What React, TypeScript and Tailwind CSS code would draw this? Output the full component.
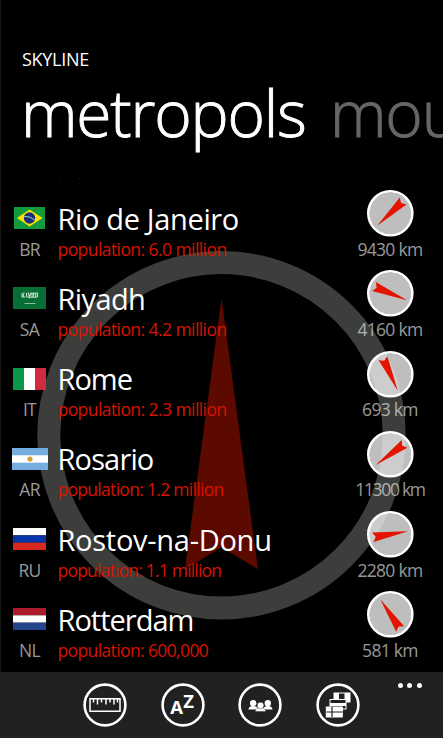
import type { ReactNode } from 'react'

const NEEDLE = '0,-137 36.5,134 0,112 -36.5,134'

const cities = [
  { name: 'Rio de Janeiro', code: 'BR', population: '6.0 million', distance: '9430 km', angle: -133.7, tracking: 'tracking-[-0.35px]', detail: 'tracking-[-0.57px]' },
  { name: 'Riyadh', code: 'SA', population: '4.2 million', distance: '4160 km', angle: 112.4, tracking: 'tracking-[-0.6px]', detail: 'tracking-[-0.57px]' },
  { name: 'Rome', code: 'IT', population: '2.3 million', distance: '693 km', angle: 155.6, tracking: 'tracking-[-1px]', detail: 'tracking-[-0.57px]' },
  { name: 'Rosario', code: 'AR', population: '1.2 million', distance: '11300 km', angle: -126.5, tracking: 'tracking-[-0.85px]', detail: 'tracking-[-0.7px]' },
  { name: 'Rostov-na-Donu', code: 'RU', population: '1.1 million', distance: '2280 km', angle: 80.2, tracking: 'tracking-[-0.28px]', detail: 'tracking-[-0.8px]' },
  { name: 'Rotterdam', code: 'NL', population: '600,000', distance: '581 km', angle: -33.9, tracking: 'tracking-[-1px]', detail: 'tracking-[-0.62px]' },
]

function Stripes({ colors }: { colors: string[] }) {
  return (
    <svg width="33" height="22" viewBox="0 0 33 22">
      {colors.map((c, i) => (
        <rect key={i} y={(i * 22) / 3} width="33" height={22 / 3} fill={c} />
      ))}
    </svg>
  )
}

function Flag({ code }: { code: string }) {
  switch (code) {
    case 'BR':
      return (
        <svg width="31" height="22" viewBox="0 0 31 22">
          <rect width="31" height="22" fill="#129a3c" />
          <path d="M15.5 2.5L28.5 11L15.5 19.5L3 11Z" fill="#fde102" />
          <circle cx="15.5" cy="11" r="5.7" fill="#152f78" />
          <path d="M10.3 9.5Q16 8.8 20.7 13" stroke="#b9c4d8" strokeWidth="1" fill="none" />
        </svg>
      )
    case 'SA':
      return (
        <svg width="33" height="22" viewBox="0 0 33 22">
          <rect width="33" height="22" fill="#076f35" />
          <path
            d="M9 6v4M11 5.5l-1 4.5h2.5M13.5 6v4M15 5.5l1.5 4.5 1.5-4.5M19 6v4M20.5 5.5v4.5M22 6l1 4M24.5 5.5v4.5M9 10h3M14 10.3h10M18 6.3h6"
            stroke="#c5dccd"
            strokeWidth="1.1"
            fill="none"
          />
          <path d="M11.5 16.5h11" stroke="#8fbca0" strokeWidth="1" />
        </svg>
      )
    case 'IT':
      return (
        <svg width="33" height="22" viewBox="0 0 33 22">
          <rect width="11" height="22" fill="#0b984a" />
          <rect x="11" width="11" height="22" fill="#fff" />
          <rect x="22" width="11" height="22" fill="#d22b3f" />
        </svg>
      )
    case 'AR':
      return (
        <svg width="36" height="22" viewBox="0 0 36 22">
          <rect width="36" height="22" fill="#76addf" />
          <rect y="7.3" width="36" height="7.4" fill="#fff" />
          <circle cx="18" cy="11" r="2.6" fill="#dc9a35" />
        </svg>
      )
    case 'RU':
      return <Stripes colors={['#ffffff', '#0535a8', '#d8291f']} />
    default:
      return <Stripes colors={['#ad1c2b', '#ffffff', '#21468b']} />
  }
}

function Direction({ angle }: { angle: number }) {
  return (
    <svg width="48" height="48" viewBox="-24.3 -24.3 48 48">
      <circle r="21" fill="#fff" fillOpacity="0.745" />
      <circle r="22" fill="none" stroke="#fff" strokeWidth="2.6" />
      <g transform={`rotate(${angle}) scale(0.132)`}>
        <polygon points={NEEDLE} fill="#e51400" />
      </g>
    </svg>
  )
}

function BackgroundCompass() {
  return (
    <svg className="absolute left-[37px] top-[251px]" width="370" height="370" viewBox="-184.5 -184.3 370 370">
      <circle r="172.7" fill="none" stroke="#3c3e3c" strokeWidth="23" />
      <polygon points={NEEDLE} fill="#5c0a00" />
    </svg>
  )
}

function BarButton({ children }: { children: ReactNode }) {
  return (
    <button className="block">
      <svg width="44" height="44" viewBox="-22 -22 44 44">
        <circle r="20.4" fill="none" stroke="#fff" strokeWidth="2.6" />
        {children}
      </svg>
    </button>
  )
}

export default function App() {
  return (
    <div className="relative flex h-[738px] w-[443px] flex-col overflow-hidden bg-black font-['Open_Sans',sans-serif] text-white shadow-[inset_1px_0_0_#161616]">
      <BackgroundCompass />

      <header className="relative h-[189px] pl-[22px] pt-[47px]">
        <p className="text-[18px] leading-6 tracking-[-0.3px]">SKYLINE</p>
        <div className="-ml-px mt-[2px] flex gap-[24px] whitespace-nowrap text-[64px] font-light leading-[80px] tracking-[-1.2px]">
          <h1 className="w-[285px] shrink-0 [-webkit-text-stroke:0.9px_#fff]">metropols</h1>
          <span className="text-[#666] [-webkit-text-stroke:0.9px_#666]">mountains</span>
        </div>
        {/* descenders of the row scrolled out above */}
        <div className="ml-[37px] mt-[25px] flex gap-[19px]">
          <i className="size-px bg-[#6b0a00]" />
          <i className="size-px bg-[#6b0a00]" />
        </div>
      </header>

      <ul className="relative flex-1">
        {cities.map((city) => (
          <li key={city.code} className="flex h-[80.3px] whitespace-nowrap">
            <div className="flex w-[59px] flex-col items-center pt-[18px]">
              <Flag code={city.code} />
              <span className="mt-[8.5px] text-[17.5px] leading-[22px] tracking-[-0.7px] text-[#999]">{city.code}</span>
            </div>
            <div className="-ml-[1.5px] flex-1 pt-[9.5px]">
              <p className={`text-[29px] leading-[40px] ${city.tracking}`}>{city.name}</p>
              <p className={`-mt-px text-[17.5px] leading-[22px] text-[#d61300] ${city.detail}`}>population: {city.population}</p>
            </div>
            <div className="mr-[3px] flex w-[100px] flex-col items-center">
              <Direction angle={city.angle} />
              <span className={`mt-[0.5px] text-[17.5px] leading-[22px] text-white/60 ${city.code === 'AR' ? 'tracking-[-1.3px]' : 'tracking-[-0.7px]'}`}>
                {city.distance}
              </span>
            </div>
          </li>
        ))}
      </ul>

      <footer className="relative flex h-[66px] shrink-0 items-start bg-[#212121] pl-[83px] pt-[11px]">
        <div className="flex gap-[33.6px]">
          <BarButton>
            <path d="M-15 -6.2H15V6.2H-15Z" fill="none" stroke="#fff" strokeWidth="1.5" />
            <path d="M-11.5 -6v3.5M-7.5 -6v5.5M-3.5 -6v3.5M1 -6v5.5M5 -6v3.5M9 -6v5.5M12.5 -6v3.5" stroke="#fff" strokeWidth="1.5" />
          </BarButton>
          <BarButton>
            <text x="-12.8" y="8.7" fontSize="18.5" fontWeight="700" fill="#fff">A</text>
            <text x="0.3" y="3" fontSize="18.5" fontWeight="700" fill="#fff">Z</text>
          </BarButton>
          <BarButton>
            <g fill="#fff">
              <circle cx="-6.8" cy="-1.8" r="3.2" />
              <circle cx="7.8" cy="-1.8" r="3.2" />
              <path d="M-11.5 4.5C-11.5 2-9 1-7 1S-2 2-2 4.5ZM3 4.5C3 2 6 1 8 1S12.500 2 12.5 4.5Z" />
            </g>
            <g fill="#fff" stroke="#212121" strokeWidth="0.4">
              <path d="M-4.7 6.4C-4.7 3.5-2 2.5 0.5 2.5S5.7 3.5 5.7 6.4Z" />
              <circle cx="0.5" cy="0.5" r="3.3" />
            </g>
          </BarButton>
          <BarButton>
            <g stroke="#fff" strokeWidth="1">
              <rect x="-4" y="-12" width="16" height="9" fill="#212121" />
              <rect x="-3.5" y="-11.5" width="4" height="8" fill="#fff" />
              <rect x="7" y="-11.5" width="4.5" height="8" fill="#fff" />
              <rect x="-8" y="-5.5" width="16" height="9.5" fill="#212121" />
              <rect x="-7.5" y="-1.5" width="15" height="2" fill="#fff" />
              <rect x="-11.7" y="2" width="16" height="10" fill="#fff" />
            </g>
            <path d="M-6 2v10M-11.5 7h16" stroke="#212121" strokeWidth="1.2" />
          </BarButton>
        </div>
        <div className="ml-[38px] flex gap-[4.5px]">
          <i className="size-[5px] rounded-full bg-white" />
          <i className="size-[5px] rounded-full bg-white" />
          <i className="size-[5px] rounded-full bg-white" />
        </div>
      </footer>
    </div>
  )
}
